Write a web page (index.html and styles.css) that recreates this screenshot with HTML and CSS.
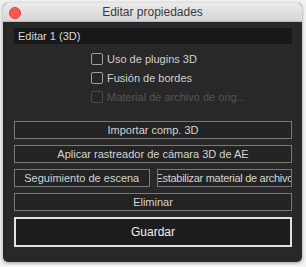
FILE: index.html
```html
<!DOCTYPE html>
<html lang="es">
  <head>
    <meta charset="UTF-8" />
    <meta name="viewport" content="width=device-width, initial-scale=1.0" />
    <title>Editar propiedades</title>

    <link rel="stylesheet" href="styles.css">
  </head>
  <body>
    <div class="window">
      <div class="titlebar">
        <span class="close"></span>
        <span class="title">Editar propiedades</span>
      </div>

      <div class="content">
        <div class="name-field">Editar 1 (3D)</div>

        <div class="checks">
          <label class="check"><span class="box"></span>Uso de plugins 3D</label>
          <label class="check"><span class="box"></span>Fusión de bordes</label>
          <label class="check disabled"><span class="box"></span>Material de archivo de orig...</label>
        </div>

        <div class="actions">
          <button class="btn">Importar comp. 3D</button>
          <button class="btn">Aplicar rastreador de cámara 3D de AE</button>
          <div class="btn-row">
            <button class="btn">Seguimiento de escena</button>
            <button class="btn tight"><span>Estabilizar material de archivo</span></button>
          </div>
          <button class="btn">Eliminar</button>
          <button class="btn save">Guardar</button>
        </div>
      </div>
    </div>
  </body>
</html>
```

FILE: styles.css
```css
body {
  margin: 0;
  padding: 3px;
  background-color: #f3f3f3;
  font-family: "Liberation Sans", Arial, sans-serif;
}

.window {
  width: 299px;
  height: 259px;
  background-color: #282828;
  border-radius: 5px;
  overflow: hidden;
  box-shadow: 0 1px 4px rgba(0, 0, 0, 0.35);
}

.titlebar {
  position: relative;
  height: 19px;
  background: linear-gradient(#ebebeb, #d5d5d5);
  border-bottom: 1px solid #bdbdbd;
  box-sizing: border-box;
  display: flex;
  align-items: center;
  justify-content: center;
}

.titlebar .title {
  font-size: 12px;
  color: #3a3a3a;
}

.titlebar .close {
  position: absolute;
  left: 6px;
  top: 4px;
  width: 12px;
  height: 12px;
  border-radius: 50%;
  background-color: #fc5753;
  border: 0.5px solid #df3d38;
  box-sizing: border-box;
}

.content {
  padding: 6px 10px 0 11px;
}

.name-field {
  height: 16px;
  line-height: 16px;
  padding-left: 4px;
  background-color: #181818;
  color: #d8d8d8;
  font-size: 11px;
}

.checks {
  margin-top: 5px;
  padding-left: 77px;
  display: flex;
  flex-direction: column;
}

.check {
  height: 19px;
  display: flex;
  align-items: center;
  gap: 4px;
  color: #d0d0d0;
  font-size: 11px;
}

.check .box {
  width: 12px;
  height: 12px;
  box-sizing: border-box;
  border: 1px solid #a0a0a0;
  border-radius: 2px;
  background-color: #262626;
}

.check.disabled {
  color: #555;
}

.check.disabled .box {
  border-color: #4a4a4a;
}

.actions {
  margin-top: 15px;
  display: flex;
  flex-direction: column;
  gap: 6px;
}

.btn {
  height: 18px;
  padding: 0;
  background-color: #232323;
  border: 1px solid #7a7a7a;
  color: #d4d4d4;
  font-family: inherit;
  font-size: 11px;
  overflow: hidden;
  white-space: nowrap;
  display: flex;
  align-items: center;
  justify-content: center;
}

.btn.tight {
  letter-spacing: -0.3px;
}

.btn-row {
  display: grid;
  grid-template-columns: 1fr 1fr;
  gap: 7px;
}

.btn.save {
  height: 30px;
  border: 2px solid #e2e2e2;
  background-color: #1d1d1d;
  color: #f0f0f0;
  font-size: 12px;
}
```
